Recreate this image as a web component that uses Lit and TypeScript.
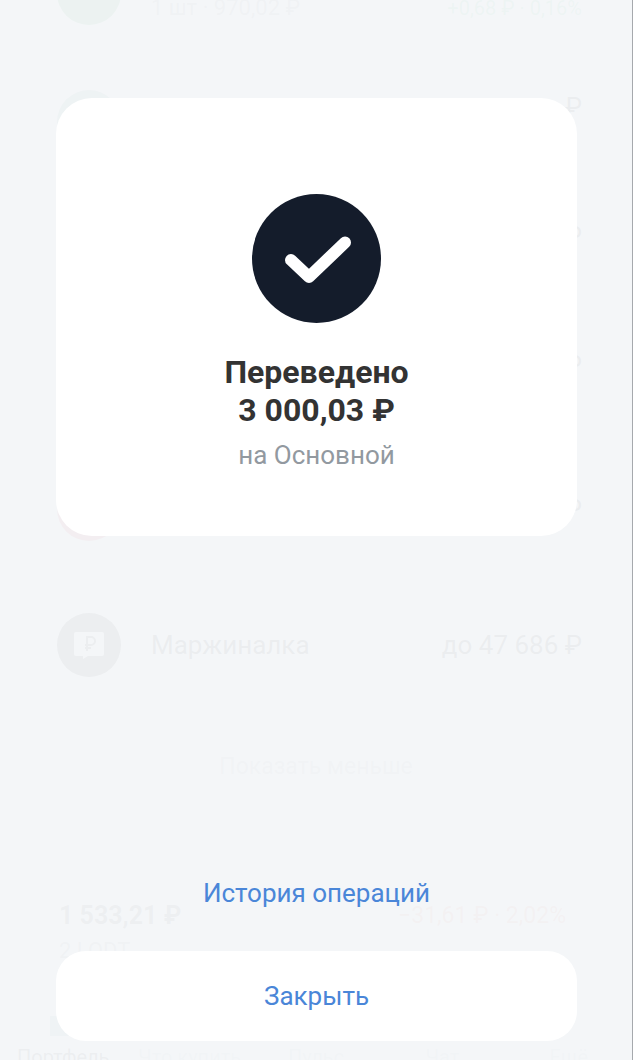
import { LitElement, css, html, nothing } from "lit";
import { customElement, property, state } from "lit/decorators.js";

type Position = {
  tone: "green" | "mint" | "plain" | "red";
  details?: string;
  value?: string;
  change?: string;
};

const POSITIONS: Position[] = [
  { tone: "green", details: "1 шт · 970,02 ₽", change: "+0,68 ₽ · 0,16%" },
  { tone: "mint", value: "₽", details: " ", change: " " },
  { tone: "plain", value: "₽", details: " ", change: " " },
  { tone: "plain", value: "₽", details: " ", change: " " },
  { tone: "red", value: "₽" },
];

const TABS = ["Портфель", "Что купить", "Пульс", "Чат", "Ещё"];

@customElement("portfolio-page")
export class PortfolioPage extends LitElement {
  private _renderPosition(position: Position) {
    return html`
      <li class="row">
        <span class="logo ${position.tone}"></span>
        <div class="main">
          <div></div>
          ${position.details ? html`<div class="details">${position.details}</div>` : nothing}
        </div>
        <div class="value">
          <div>${position.value ?? nothing}</div>
          ${position.change ? html`<div class="details gain">${position.change}</div>` : nothing}
        </div>
      </li>
    `;
  }

  protected render() {
    return html`
      <ul class="list">
        ${POSITIONS.map((position) => this._renderPosition(position))}
      </ul>
      <div class="row margin">
        <span class="logo dark">
          <svg width="32" height="28" viewBox="0 0 32 28" aria-hidden="true">
            <path
              d="M3 1h26a2 2 0 0 1 2 2v20a2 2 0 0 1-2 2H15l-5 3v-3H3a2 2 0 0 1-2-2V3a2 2 0 0 1 2-2z"
              fill="#fff"
            />
            <path
              d="M14 20V6h4a4 4 0 0 1 0 8h-6m0 3h6"
              fill="none"
              stroke="#333"
              stroke-width="2"
            />
          </svg>
        </span>
        <div class="main">Маржиналка</div>
        <div class="value">до 47 686 ₽</div>
      </div>
      <div class="less">Показать меньше</div>
      <div class="total">
        <div>
          <div class="sum">1 533,21 ₽</div>
          <div class="details">2 LQDT</div>
        </div>
        <div class="loss">−31,61 ₽ · 2,02%</div>
      </div>
      <div class="tabs">
        ${TABS.map(
          (tab, index) => html`
            <div class="tab ${index === 0 ? "active" : ""}">
              <svg class="tab-icon" viewBox="0 0 30 30" aria-hidden="true">
                ${index === 0
                  ? html`<svg><path d="M2 4h9v6h17v14H2z" fill="#7fa4ad" /></svg>`
                  : nothing}
              </svg>
              ${tab}
            </div>
          `
        )}
      </div>
    `;
  }

  static styles = css`
    :host {
      display: flex;
      flex-direction: column;
      color: #222;
      font-size: 26px;
      line-height: 30px;
    }

    .list {
      display: flex;
      flex-direction: column;
      gap: 65px;
      margin: -39px 0 0;
      padding: 0;
      list-style: none;
    }

    .row {
      display: flex;
      align-items: center;
      gap: 30px;
      height: 64px;
      padding: 0 50px 0 57px;
    }

    .margin {
      margin-top: 72px;
    }

    .logo {
      display: flex;
      align-items: center;
      justify-content: center;
      flex: none;
      width: 64px;
      height: 64px;
      border-radius: 50%;
      background: #e4e6ea;
    }

    .logo.green {
      background: #2f9e50;
    }

    .logo.mint {
      background: #74a397;
    }

    .logo.red {
      background: #d8455a;
    }

    .logo.dark {
      background: #333;
    }

    .main {
      flex: 1;
      min-width: 0;
    }

    .main > div,
    .value > div {
      min-height: 30px;
    }

    .value {
      text-align: right;
    }

    .details {
      color: #8c9299;
      font-size: 22px;
      line-height: 34px;
    }

    .gain {
      color: #55bb88;
      font-size: 20px;
    }

    .less {
      margin-top: 75px;
      color: #a4a9b0;
      font-size: 23px;
      text-align: center;
    }

    .total {
      display: flex;
      align-items: flex-start;
      justify-content: space-between;
      margin-top: 116px;
      padding: 0 66px 0 59px;
      line-height: 36px;
    }

    .sum {
      color: #555;
      font-size: 25px;
      font-weight: 700;
    }

    .loss {
      color: #e07a70;
      font-size: 23px;
    }

    .tabs {
      display: flex;
      margin-top: 44px;
      font-size: 20px;
    }

    .tab {
      display: flex;
      flex: 1;
      flex-direction: column;
      align-items: center;
      color: #b6bbc1;
    }

    .tab.active {
      color: #333;
    }

    .tab-icon {
      width: 30px;
      height: 30px;
    }
  `;
}

@customElement("transfer-result")
export class TransferResult extends LitElement {
  @property() public amount = "";
  @property() public account = "";

  private _close(): void {
    this.dispatchEvent(new CustomEvent("close"));
  }

  protected render() {
    return html`
      <section class="card">
        <svg class="check" viewBox="0 0 129 129" aria-hidden="true">
          <circle cx="64.5" cy="64.5" r="64.5" fill="#141c2b" />
          <path
            d="M39 66L57 83 93 48.500"
            fill="none"
            stroke="#fff"
            stroke-width="12"
            stroke-linecap="round"
            stroke-linejoin="round"
          />
        </svg>
        <h1 class="title">Переведено<br />${this.amount}</h1>
        <p class="account">на ${this.account}</p>
      </section>
      <a class="history" href="#history">История операций</a>
      <button class="close" @click=${this._close}>Закрыть</button>
    `;
  }

  static styles = css`
    :host {
      display: flex;
      flex-direction: column;
      align-items: center;
      box-sizing: border-box;
      padding: 98px 55px 19px 56px;
      background: rgba(244, 246, 248, 0.96);
    }

    .card {
      display: flex;
      flex-direction: column;
      align-items: center;
      align-self: stretch;
      padding: 96px 24px 65px;
      border-radius: 36px;
      background: #fff;
      text-align: center;
    }

    .check {
      width: 129px;
      height: 129px;
    }

    .title {
      margin: 30px 0 10px;
      color: #333;
      font-size: 32px;
      font-weight: 700;
      line-height: 38px;
    }

    .account {
      margin: 0;
      color: #9299a0;
      font-size: 26px;
      line-height: 32px;
    }

    .history {
      margin-top: auto;
      margin-bottom: 42px;
      color: #4a86d8;
      font-size: 26px;
      line-height: 32px;
      text-decoration: none;
    }

    .close {
      align-self: stretch;
      height: 90px;
      padding: 0;
      border: none;
      border-radius: 30px;
      background: #fff;
      color: #4a86d8;
      font: inherit;
      font-size: 26px;
      cursor: pointer;
    }
  `;
}

@customElement("app-root")
export class AppRoot extends LitElement {
  @state() private _open = true;

  protected render() {
    return html`
      <portfolio-page ?inert=${this._open}></portfolio-page>
      ${this._open
        ? html`<transfer-result
            class="overlay"
            amount="3 000,03 ₽"
            account="Основной"
            @close=${() => (this._open = false)}
          ></transfer-result>`
        : nothing}
    `;
  }

  static styles = css`
    :host {
      display: block;
      position: relative;
      box-sizing: border-box;
      height: 100vh;
      overflow: hidden;
      border-right: 1px solid #a6a9ad;
      background: #fff;
      font-family: Roboto, "Noto Sans", sans-serif;
    }

    .overlay {
      position: absolute;
      inset: 0;
    }
  `;
}

declare global {
  interface HTMLElementTagNameMap {
    "app-root": AppRoot;
    "portfolio-page": PortfolioPage;
    "transfer-result": TransferResult;
  }
}
